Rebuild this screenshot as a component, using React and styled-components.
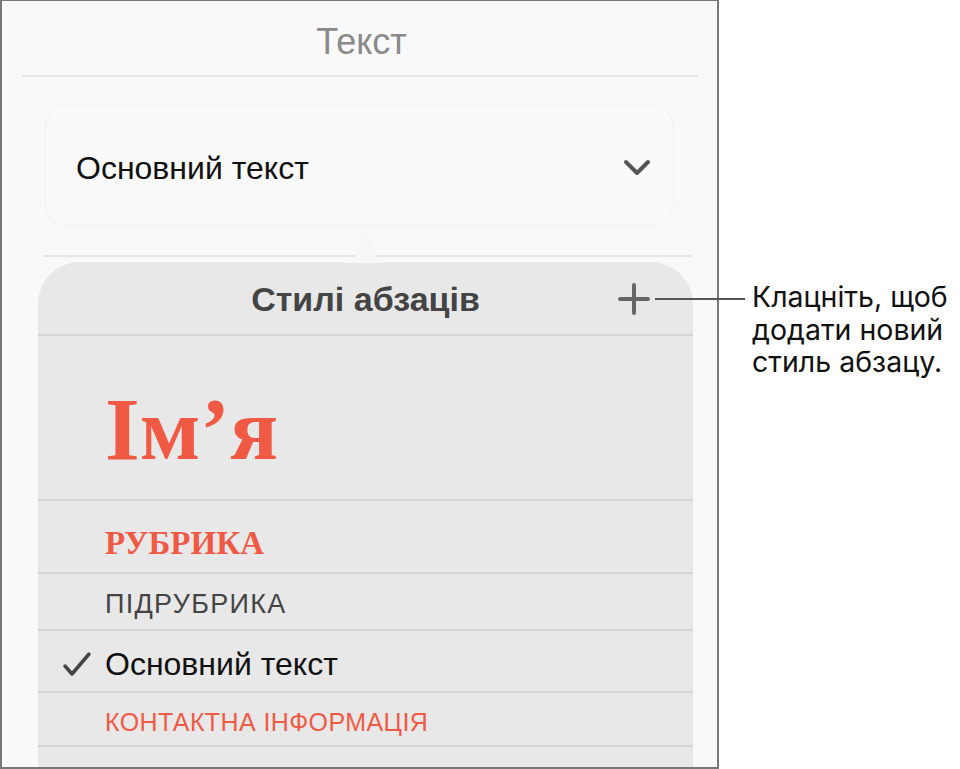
import React from "react";
import styled, { createGlobalStyle } from "styled-components";

const Global = createGlobalStyle`
  html, body { margin: 0; padding: 0; background: #ffffff; }
  body { font-family: "Liberation Sans", Arial, sans-serif; }
`;

const Page = styled.div`
  position: relative;
  width: 960px;
  height: 769px;
  display: flex;
  overflow: hidden;
`;

const Frame = styled.div`
  width: 719px;
  height: 769px;
  flex-shrink: 0;
  box-sizing: border-box;
  border: 2px solid #787878;
  border-top-width: 1px;
  background: #f9f9f9;
  display: flex;
  flex-direction: column;
  overflow: hidden;
`;

const TitleBar = styled.div`
  height: 74px;
  flex-shrink: 0;
  display: flex;
  align-items: center;
  justify-content: center;
  font-size: 36px;
  color: #8a8a8a;
  padding: 8px 0 0 4px;
  box-sizing: border-box;
`;

const Rule = styled.div`
  height: 2px;
  background: ${(p) => p.$color || "#e6e6e6"};
  margin: ${(p) => p.$margin || "0"};
  flex-shrink: 0;
`;

const Card = styled.div`
  margin: 28px 43px 0 43px;
  height: 121px;
  box-sizing: border-box;
  border-radius: 22px;
  background: #fafafa;
  border: 1px solid #f1f1f1;
  display: flex;
  align-items: center;
  justify-content: space-between;
  padding: 5px 22px 0 30px;
  flex-shrink: 0;
`;

const CardText = styled.span`
  font-size: 32px;
  color: #111;
`;

const PopoverWrap = styled.div`
  position: relative;
  margin: 5px 24px 0 36px;
  flex: 1 1 auto;
  min-height: 0;
  display: flex;
  flex-direction: column;
`;

const Arrow = styled.svg`
  position: absolute;
  top: -29px;
  left: 300px;
`;

const Popover = styled.div`
  flex: 1 1 auto;
  min-height: 0;
  background: #e8e8e8;
  border-radius: 42px 42px 0 0;
  display: flex;
  flex-direction: column;
  overflow: hidden;
`;

const PopHeader = styled.div`
  height: 72px;
  display: flex;
  align-items: center;
  justify-content: center;
  position: relative;
  font-size: 34px;
  font-weight: 700;
  color: #444;
  flex-shrink: 0;
  padding-top: 3px;
  box-sizing: border-box;
`;

const PlusBtn = styled.svg`
  position: absolute;
  right: 43px;
  top: 21px;
`;

const Row = styled.div`
  height: ${(p) => p.$h}px;
  flex-shrink: 0;
  display: flex;
  align-items: ${(p) => (p.$end ? "flex-end" : "center")};
  padding: ${(p) => (p.$end ? "0 0 25px 67px" : `${p.$shift || 0}px 0 0 67px`)};
  box-sizing: border-box;
  position: relative;
`;

const Check = styled.svg`
  position: absolute;
  left: 24px;
  top: calc(50% + 3px);
  transform: translateY(-50%);
`;

const SerifLabel = styled.span`
  font-family: "Liberation Serif", "Times New Roman", serif;
  font-weight: 700;
  color: #f05a45;
  font-size: ${(p) => p.$size}px;
  line-height: 1;
`;

const SansLabel = styled.span`
  font-size: ${(p) => p.$size}px;
  color: ${(p) => p.$color};
  line-height: 1;
  letter-spacing: ${(p) => p.$ls || 0}px;
`;

const Callout = styled.div`
  position: absolute;
  left: 655px;
  top: 281px;
  display: flex;
  align-items: flex-start;
`;

const Leader = styled.div`
  width: 90px;
  height: 1.5px;
  background: #555;
  margin-top: 17px;
`;

const CalloutText = styled.div`
  margin-left: 7px;
  font-family: Inter, "Liberation Sans", sans-serif;
  font-size: 28.5px;
  line-height: 32.5px;
  color: #111;
`;

const styles = [
  { kind: "serif", text: "РУБРИКА", size: 33, h: 71, shift: 14 },
  { kind: "sans", text: "ПІДРУБРИКА", size: 27, h: 55, shift: 5, color: "#444", ls: 1.3 },
  { kind: "sans", text: "Основний текст", size: 32, h: 60, shift: 6, color: "#111", checked: true },
  { kind: "sans", text: "КОНТАКТНА ІНФОРМАЦІЯ", size: 25, h: 52, shift: 6, color: "#f05a45", ls: 0.4 },
];

export default function App() {
  return (
    <>
      <Global />
      <Page>
        <Frame>
          <TitleBar>Текст</TitleBar>
          <Rule $margin="0 19px 0 20px" />
          <Card>
            <CardText>Основний текст</CardText>
            <svg width="28" height="18" viewBox="0 0 28 18">
              <polyline points="3,3 14,14 25,3" fill="none" stroke="#555" strokeWidth="4" strokeLinecap="round" strokeLinejoin="round" />
            </svg>
          </Card>
          <Rule $margin="29px 26px 0 41px" />
          <PopoverWrap>
            <Arrow width="56" height="30" viewBox="0 0 56 30">
              <path d="M0,30 C10,30 14,28 20,20 L24,6 C26,1 30,1 32,6 L36,20 C42,28 46,30 56,30 Z" fill="#f7f7f6" />
            </Arrow>
            <Popover>
              <PopHeader>
                Стилі абзаців
                <PlusBtn width="32" height="32" viewBox="0 0 32 32">
                  <path d="M16,2 V30 M2,16 H30" stroke="#666" strokeWidth="4" strokeLinecap="round" />
                </PlusBtn>
              </PopHeader>
              <Rule $color="#d5d5d5" />
              <Row $h={163} $end>
                <SerifLabel $size={89}>Ім’я</SerifLabel>
              </Row>
              {styles.map((s) => (
                <React.Fragment key={s.text}>
                  <Rule $color="#d5d5d5" />
                  <Row $h={s.h} $shift={s.shift}>
                    {s.checked && (
                      <Check width="30" height="26" viewBox="0 0 30 26">
                        <polyline points="3,15 10,23 27,3" fill="none" stroke="#444" strokeWidth="3.5" strokeLinecap="round" strokeLinejoin="round" />
                      </Check>
                    )}
                    {s.kind === "serif" ? (
                      <SerifLabel $size={s.size}>{s.text}</SerifLabel>
                    ) : (
                      <SansLabel $size={s.size} $color={s.color} $ls={s.ls}>
                        {s.text}
                      </SansLabel>
                    )}
                  </Row>
                </React.Fragment>
              ))}
              <Rule $color="#d5d5d5" />
              <Row $h={60} />
            </Popover>
          </PopoverWrap>
        </Frame>
        <Callout>
          <Leader />
          <CalloutText>
            Клацніть, щоб
            <br />
            додати новий
            <br />
            стиль абзацу.
          </CalloutText>
        </Callout>
      </Page>
    </>
  );
}
